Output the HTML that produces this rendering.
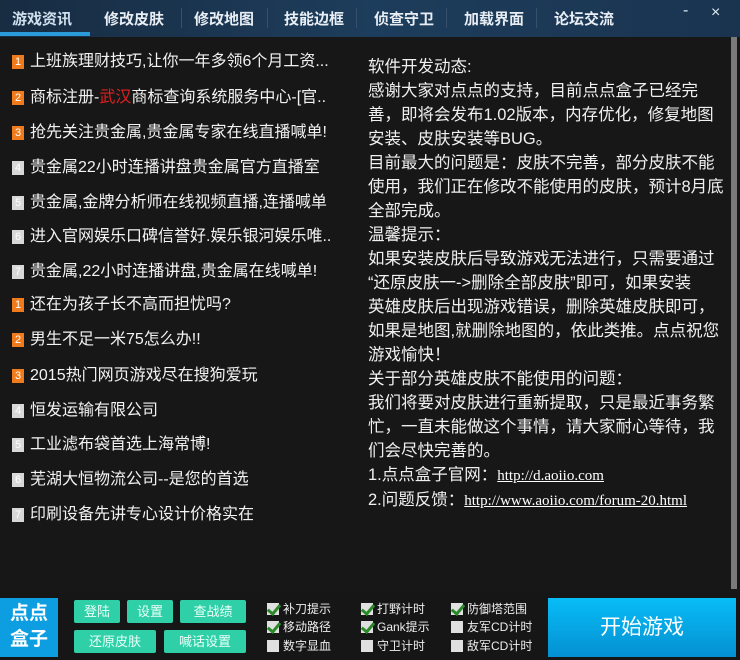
<!DOCTYPE html>
<html><head><meta charset="utf-8"><style>
*{margin:0;padding:0;box-sizing:border-box}
body{width:740px;height:660px;overflow:hidden;background:#161616;font-family:"Liberation Sans","Noto Sans CJK SC",sans-serif;color:#fff;position:relative}
.top{position:absolute;left:0;top:0;width:740px;height:37px;background:linear-gradient(90deg,#182c42,#1d3d5c 50%,#1a3450);}
.tab{position:absolute;top:8px;font-size:15px;font-weight:bold;color:#e8eef4;letter-spacing:0}
.sep{position:absolute;top:8px;width:1px;height:20px;background:#34506a}
.ul{position:absolute;left:0;top:32px;width:90px;height:4px;background:#2a9ad8}
.ctl{position:absolute;top:4px;font-size:16px;color:#dfe8f0}
.main{position:absolute;left:0;top:37px;width:740px;height:556px;background:#171717}
.it{position:absolute;left:12px;font-size:16px;white-space:nowrap;color:#f2f2f2}
.b{display:inline-block;width:12px;height:14px;font-size:11px;line-height:15px;text-align:center;color:#fff;margin-right:6px;vertical-align:1px}
.o{background:#f07b1c}.g{background:#d8d8d8;color:#fff}
.right{position:absolute;left:368px;top:55px;font-size:16.5px;line-height:24px;color:#f0f0f0;white-space:nowrap}
.right a{color:#fff;font-family:"Liberation Serif",serif;text-decoration:underline;font-size:15px}
.scroll{position:absolute;left:731px;top:37px;width:6px;height:552px;background:#7a7a7a}
.bot{position:absolute;left:0;top:593px;width:740px;height:67px;background:#161616}
.logo{position:absolute;left:0;top:598px;width:58px;height:59px;background:#0c9ee0;color:#fff;font-size:19px;font-weight:bold;line-height:26px;text-align:center;padding-top:3px}
.btn{position:absolute;height:23px;background:#2fd0a8;color:#eafff8;font-size:13px;line-height:23px;text-align:center;border-radius:2px}
.cb{position:absolute;font-size:12px;color:#eee;white-space:nowrap}
.cb i{display:inline-block;width:12px;height:12px;background:#e0e0e0;vertical-align:-2px;margin-right:4px;position:relative}
.cb i.c::after{content:"";position:absolute;left:3px;top:-1px;width:5px;height:10px;border:solid #2a8a2a;border-width:0 3px 3px 0;transform:rotate(40deg)}
.start{position:absolute;left:548px;top:598px;width:188px;height:59px;background:linear-gradient(#08bdf6,#0490d2);color:#fff;font-size:21px;line-height:59px;text-align:center}
</style></head><body>
<div class="top">
<span class="tab" style="left:12px;color:#cfe0ee">游戏资讯</span>
<span class="tab" style="left:104px">修改皮肤</span><div class="sep" style="left:181px"></div>
<span class="tab" style="left:194px">修改地图</span><div class="sep" style="left:267px"></div>
<span class="tab" style="left:284px">技能边框</span><div class="sep" style="left:356px"></div>
<span class="tab" style="left:374px">侦查守卫</span><div class="sep" style="left:446px"></div>
<span class="tab" style="left:464px">加载界面</span><div class="sep" style="left:536px"></div>
<span class="tab" style="left:554px">论坛交流</span>
<div class="ul"></div>
<span class="ctl" style="left:683px;top:2px">-</span>
<span class="ctl" style="left:711px">×</span>
</div>
<div class="main"></div>
<div class="it" style="top:47px"><span class="b o">1</span>上班族理财技巧,让你一年多领6个月工资...</div>
<div class="it" style="top:83px"><span class="b o">2</span>商标注册-<span style="color:#e02020">武汉</span>商标查询系统服务中心-[官..</div>
<div class="it" style="top:118px"><span class="b o">3</span>抢先关注贵金属,贵金属专家在线直播喊单!</div>
<div class="it" style="top:153px"><span class="b g">4</span>贵金属22小时连播讲盘贵金属官方直播室</div>
<div class="it" style="top:188px"><span class="b g">5</span>贵金属,金牌分析师在线视频直播,连播喊单</div>
<div class="it" style="top:222px"><span class="b g">6</span>进入官网娱乐口碑信誉好.娱乐银河娱乐唯..</div>
<div class="it" style="top:257px"><span class="b g">7</span>贵金属,22小时连播讲盘,贵金属在线喊单!</div>
<div class="it" style="top:290px"><span class="b o">1</span>还在为孩子长不高而担忧吗?</div>
<div class="it" style="top:325px"><span class="b o">2</span>男生不足一米75怎么办!!</div>
<div class="it" style="top:361px"><span class="b o">3</span>2015热门网页游戏尽在搜狗爱玩</div>
<div class="it" style="top:396px"><span class="b g">4</span>恒发运输有限公司</div>
<div class="it" style="top:430px"><span class="b g">5</span>工业滤布袋首选上海常博!</div>
<div class="it" style="top:465px"><span class="b g">6</span>芜湖大恒物流公司--是您的首选</div>
<div class="it" style="top:500px"><span class="b g">7</span>印刷设备先讲专心设计价格实在</div>
<div class="right">软件开发动态:<br>感谢大家对点点的支持，目前点点盒子已经完<br>善，即将会发布1.02版本，内存优化，修复地图<br>安装、皮肤安装等BUG。<br>目前最大的问题是：皮肤不完善，部分皮肤不能<br>使用，我们正在修改不能使用的皮肤，预计8月底<br>全部完成。<br>温馨提示：<br>如果安装皮肤后导致游戏无法进行，只需要通过<br>“还原皮肤一->删除全部皮肤”即可，如果安装<br>英雄皮肤后出现游戏错误，删除英雄皮肤即可，<br>如果是地图,就删除地图的，依此类推。点点祝您<br>游戏愉快！<br>关于部分英雄皮肤不能使用的问题：<br>我们将要对皮肤进行重新提取，只是最近事务繁<br>忙，一直未能做这个事情，请大家耐心等待，我<br>们会尽快完善的。<br>1.点点盒子官网：<a>http://d.aoiio.com</a><br>2.问题反馈：<a>http://www.aoiio.com/forum-20.html</a></div>
<div class="scroll"></div>
<div class="bot"></div>
<div class="logo">点点<br>盒子</div>
<div class="btn" style="left:74px;top:600px;width:46px">登陆</div>
<div class="btn" style="left:127px;top:600px;width:46px">设置</div>
<div class="btn" style="left:180px;top:600px;width:66px">查战绩</div>
<div class="btn" style="left:74px;top:630px;width:82px">还原皮肤</div>
<div class="btn" style="left:164px;top:630px;width:82px">喊话设置</div>
<div class="cb" style="left:267px;top:600px"><i class="c"></i>补刀提示</div>
<div class="cb" style="left:267px;top:618px"><i class="c"></i>移动路径</div>
<div class="cb" style="left:267px;top:637px"><i></i>数字显血</div>
<div class="cb" style="left:361px;top:600px"><i class="c"></i>打野计时</div>
<div class="cb" style="left:361px;top:618px"><i class="c"></i>Gank提示</div>
<div class="cb" style="left:361px;top:637px"><i></i>守卫计时</div>
<div class="cb" style="left:451px;top:600px"><i class="c"></i>防御塔范围</div>
<div class="cb" style="left:451px;top:618px"><i></i>友军CD计时</div>
<div class="cb" style="left:451px;top:637px"><i></i>敌军CD计时</div>
<div class="start">开始游戏</div>
</body></html>
